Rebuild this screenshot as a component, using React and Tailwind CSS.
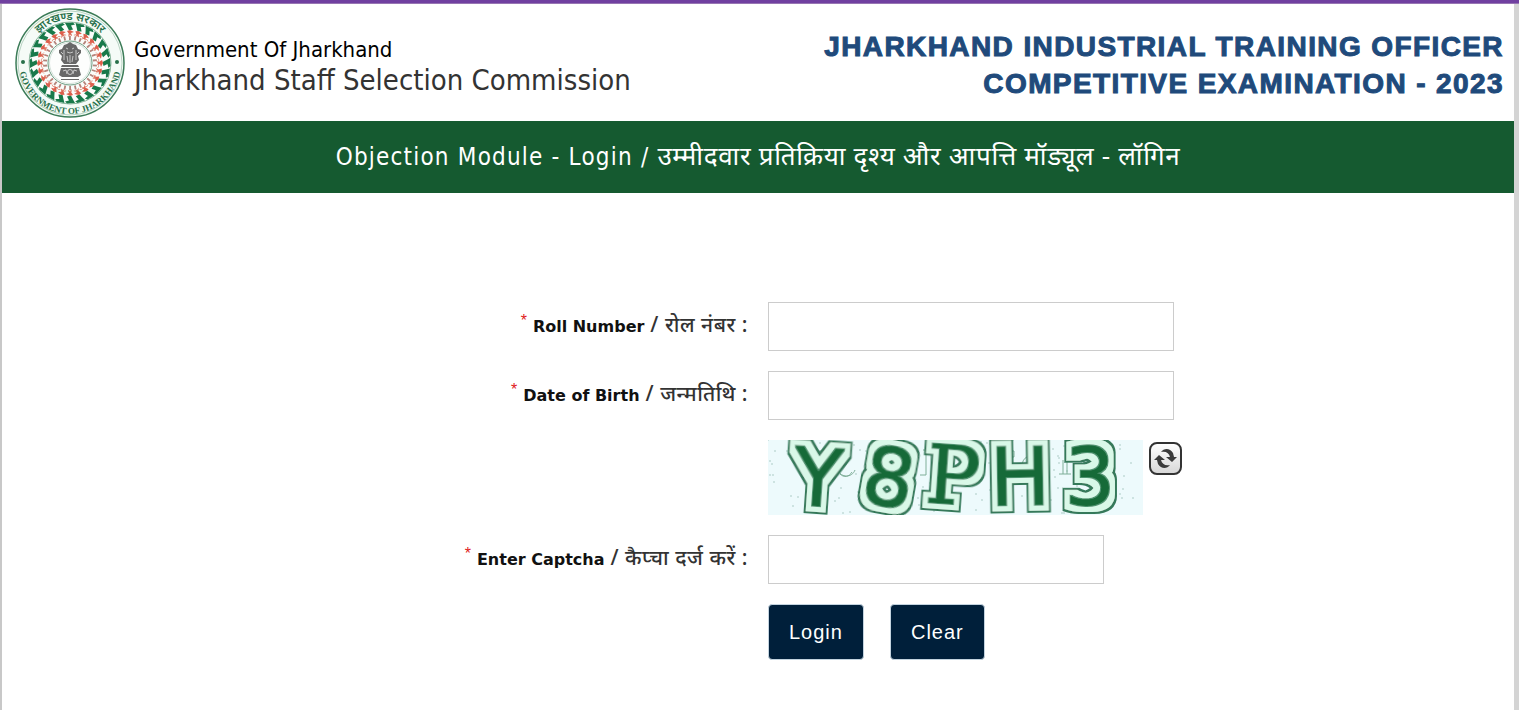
import React, { useState } from 'react';

const SPOKES = Array.from({ length: 24 }, (_, i) => i * 15);
const DOTS = Array.from({ length: 30 }, (_, i) => i * 12);

const CAPTCHA = [
  { char: 'Y', x: 50, y: 66, rotate: 4, font: 'DejaVu Sans' },
  { char: '8', x: 121, y: 66, rotate: 10, font: 'DejaVu Sans' },
  { char: 'P', x: 185, y: 64, rotate: 4, font: 'DejaVu Serif' },
  { char: 'H', x: 252, y: 65, rotate: -1, font: 'DejaVu Sans' },
  { char: '3', x: 322, y: 65, rotate: 0, font: 'DejaVu Sans' },
];

// Scattered noise behind the captcha characters
const SPECKS = Array.from({ length: 150 }, (_, i) => ({
  x: (i * 97 + ((i * i) % 31) * 7) % 373,
  y: (i * 29 + ((i * i) % 17) * 5) % 74,
}));

const StateSeal = () => (
  <svg viewBox="0 0 110 110" className="h-[110px] w-[110px] shrink-0" role="img" aria-label="Seal of Jharkhand">
    <defs>
      <path id="seal-top" d="M12 55a43 43 0 0 1 86 0" />
      <path id="seal-bottom" d="M4 55a51 51 0 0 0 102 0" />
    </defs>
    <circle cx="55" cy="55" r="54" fill="#f5fbf7" stroke="#3c7c58" strokeWidth="1.5" />
    <circle cx="55" cy="55" r="52" fill="none" stroke="#8fb8a0" strokeWidth="0.6" />
    <text fill="#28704a" fontSize="11" fontWeight="600" textAnchor="middle" fontFamily="Noto Sans, sans-serif">
      <textPath href="#seal-top" startOffset="50%">झारखण्ड सरकार</textPath>
    </text>
    <text fill="#28704a" fontSize="9" fontWeight="700" textAnchor="middle" fontFamily="Liberation Serif, serif">
      <textPath href="#seal-bottom" startOffset="50%">GOVERNMENT OF JHARKHAND</textPath>
    </text>
    <circle cx="8" cy="54" r="2" fill="#28704a" />
    <circle cx="102" cy="54" r="2" fill="#28704a" />
    <circle cx="55" cy="55" r="41" fill="#fbfdfb" stroke="#6da585" strokeWidth="0.8" />
    {SPOKES.map((deg) => (
      <g key={deg} transform={`rotate(${deg} 55 55)`}>
        <path d="M50 15l8-.5 2 2-4 1 2 4-4 1-2-4z" fill="#18794a" />
        <path d="M52 23l3-1 4 2-3 1 1 3-2-1-2 2 1-3z" fill="#dc5f4c" />
      </g>
    ))}
    {DOTS.map((deg) => (
      <g key={deg} transform={`rotate(${deg} 55 55)`}>
        <path d="M54 28h1.8v4H54z" fill="#b5837a" />
        <path d="M53 27l2-1 2 1" fill="none" stroke="#e08e7c" strokeWidth="0.8" />
      </g>
    ))}
    <circle cx="55" cy="55" r="22" fill="#fdfefd" stroke="#6a9b80" strokeWidth="1" />
    <circle cx="55" cy="55" r="20.5" fill="none" stroke="#b9cfc2" strokeWidth="0.6" />
    {/* Lion capital */}
    <g fill="#686868">
      <path d="M49 37l3-1 3-2 3 2 3 1 2 4 3 1v3l-3 3 1 4-3 4H49l-3-4 1-4-3-3v-3l3-1z" />
      <path d="M47 57h16l1 2H46z" />
      <path d="M46 60h18l2 7-3 2H47l-3-2z" />
      <path d="M46 71h18v1H46z" />
    </g>
    <g fill="none" stroke="#dedede" strokeWidth="0.8">
      <path d="M51 40l2 1M59 40l-2 1M52 44l3 1 3-1M49 42v10M61 42v10M55 47v8M52 48l1 6M58 48l-1 6M46 44l2 2M64 44l-2 2" />
      <circle cx="55" cy="64" r="2.5" />
      <path d="M48 63l3-1 1 4M62 63l-3-1-1 4" />
    </g>
  </svg>
);

const CaptchaPicture = () => (
  <svg viewBox="0 0 375 75" className="h-[75px] w-[375px]" role="img" aria-label="Captcha">
    <defs>
      {/* Dark rim, pale band and a thin solid core, all grown from the letter shape */}
      <filter id="inline-letter" x="-40%" y="-20%" width="180%" height="140%">
        <feMorphology in="SourceAlpha" operator="dilate" radius="8" result="rimShape" />
        <feMorphology in="SourceAlpha" operator="dilate" radius="6" result="bandShape" />
        <feMorphology in="SourceAlpha" operator="dilate" radius="1" result="edgeShape" />
        <feFlood floodColor="#35795a" />
        <feComposite in2="rimShape" operator="in" result="rim" />
        <feFlood floodColor="#d9f8e8" />
        <feComposite in2="bandShape" operator="in" result="band" />
        <feFlood floodColor="#4d9470" />
        <feComposite in2="edgeShape" operator="in" result="edge" />
        <feMerge>
          <feMergeNode in="rim" />
          <feMergeNode in="band" />
          <feMergeNode in="edge" />
          <feMergeNode in="SourceGraphic" />
        </feMerge>
      </filter>
    </defs>
    <rect width="375" height="75" fill="#edfafc" />
    {SPECKS.map((s, i) => (
      <circle key={i} cx={s.x} cy={s.y} r="0.8" fill="#a5c6bf" />
    ))}
    {/* Faint letter fragments showing between the big ones */}
    <g fill="none" stroke="#7fae98" strokeWidth="1">
      <path d="M46 15c4-6 12-5 13 0s-5 7-9 9M70 30c3 8 14 8 17 0M72 34c4 4 9 3 12-2" />
      <path d="M112 17c6-7 15-5 17 0M113 22c4-4 10-3 13-1" />
      <path d="M155 10h10M158 10v25h-6M163 10v27h6" />
      <path d="M234 11h12v6h-4v-3h-5v12M254 26c0-9 9-13 14-8M258 27c1-6 6-8 9-5" />
      <path d="M291 34h12M295 34V20M299 34V20M312 17h24M316 17v8M322 17v6M330 17v7" />
    </g>
    <g fontSize="80" fill="#166a38" textAnchor="middle">
      {CAPTCHA.map(({ char, x, y, rotate, font }) => (
        <text
          key={char}
          x={x}
          y={y}
          transform={`rotate(${rotate} ${x} 38)`}
          fontFamily={font}
          filter="url(#inline-letter)"
        >
          {char}
        </text>
      ))}
    </g>
  </svg>
);

const RefreshIcon = () => (
  <svg viewBox="0 0 27 27" className="h-[27px] w-[27px]" fill="#3b3b3b" aria-hidden="true">
    <path d="M9 7c3-4 9-4 12 1l1 4h3l-5 5-6-5h4c-1-4-4-6-9-5z" />
    <path d="M18 20c-3 4-9 4-12-1l-1-4H2l5-5 6 5H9c1 4 4 6 9 5z" />
  </svg>
);

const FieldLabel = ({ htmlFor, en, hi }) => (
  <label
    htmlFor={htmlFor}
    className="pr-[10px] pb-[6px] text-right font-['Noto_Sans','Noto_Sans_Devanagari',sans-serif] text-[21px] leading-[30px] font-medium tracking-wide text-[#333]"
  >
    <span className="align-top font-['Liberation_Sans',sans-serif] text-base font-normal tracking-normal text-[#e02020]">*</span>{' '}
    <span className="font-['DejaVu_Sans',sans-serif] text-base font-bold tracking-normal text-[#111]">{en}</span> / {hi} :
  </label>
);

const inputClass = 'h-[49px] border border-[#ccc] bg-white px-3 text-lg outline-none focus:border-[#155a30]';
const buttonClass =
  "h-14 rounded border border-[#c3d3df] bg-[#001f3a] px-5 font-['Liberation_Sans',sans-serif] text-[20px] tracking-wider text-white";

const App = () => {
  const [form, setForm] = useState({ roll: '', dob: '', captcha: '' });

  const handleChange = (e) => {
    setForm({ ...form, [e.target.name]: e.target.value });
  };

  const handleClear = () => setForm({ roll: '', dob: '', captcha: '' });

  return (
    <div className="flex min-h-screen flex-col border-t-[3px] border-[#7040a0] bg-white">
      <div className="h-px bg-[#9775b3]" />
      <div className="flex-1 border-r-[5px] border-l-2 border-r-[#d4d4d4] border-l-[#c8c8c8]">
        <header className="flex h-[117px] items-center justify-between pr-[10px] pl-[13px]">
          <div className="flex items-center gap-[9px]">
            <StateSeal />
            <div className="pt-[6px] font-['DejaVu_Sans_Condensed','DejaVu_Sans',sans-serif]">
              <p className="text-[22px] leading-[28px] text-black">Government Of Jharkhand</p>
              <p className="text-[29px] leading-[32px] text-[#333]">Jharkhand Staff Selection Commission</p>
            </div>
          </div>
          <h1 className="pt-1 text-right font-['Liberation_Sans',sans-serif] text-[28px] leading-[37px] font-black tracking-wider text-[#204a7b] [-webkit-text-stroke:1px_#204a7b]">
            JHARKHAND INDUSTRIAL TRAINING OFFICER
            <br />
            COMPETITIVE EXAMINATION - 2023
          </h1>
        </header>

        <div className="flex h-[72px] items-center justify-center bg-[#155a30] pb-1">
          <h2 className="font-['DejaVu_Sans_Condensed','DejaVu_Sans',sans-serif] text-[24px] tracking-wider text-white">
            Objection Module - Login /{' '}
            <span className="font-['Noto_Sans','Noto_Sans_Devanagari',sans-serif] text-[26px] tracking-wide">
              उम्मीदवार प्रतिक्रिया दृश्य और आपत्ति मॉड्यूल - लॉगिन
            </span>
          </h2>
        </div>

        <form className="flex flex-col gap-5 pt-[109px] pb-12" onSubmit={(e) => e.preventDefault()}>
          <div className="grid grid-cols-2 items-center">
            <FieldLabel htmlFor="roll" en="Roll Number" hi="रोल नंबर" />
            <div className="flex pl-[10px]">
              <input id="roll" name="roll" type="text" value={form.roll} onChange={handleChange} className={`w-[406px] ${inputClass}`} />
            </div>
          </div>

          <div className="grid grid-cols-2 items-center">
            <FieldLabel htmlFor="dob" en="Date of Birth" hi="जन्मतिथि" />
            <div className="flex pl-[10px]">
              <input id="dob" name="dob" type="text" value={form.dob} onChange={handleChange} className={`w-[406px] ${inputClass}`} />
            </div>
          </div>

          <div className="grid grid-cols-2">
            <div className="col-start-2 flex items-start gap-[6px] pl-[10px]">
              <CaptchaPicture />
              <button
                type="button"
                aria-label="Refresh captcha"
                className="mt-[2px] flex h-[33px] w-[33px] items-center justify-center rounded-lg border-2 border-[#333] bg-linear-to-b from-white to-[#d8d8d8]"
              >
                <RefreshIcon />
              </button>
            </div>
          </div>

          <div className="grid grid-cols-2 items-center">
            <FieldLabel htmlFor="captcha" en="Enter Captcha" hi="कैप्चा दर्ज करें" />
            <div className="flex pl-[10px]">
              <input id="captcha" name="captcha" type="text" value={form.captcha} onChange={handleChange} className={`w-[336px] ${inputClass}`} />
            </div>
          </div>

          <div className="grid grid-cols-2">
            <div className="col-start-2 flex gap-[26px] pl-[10px]">
              <button type="submit" className={buttonClass}>Login</button>
              <button type="button" onClick={handleClear} className={buttonClass}>Clear</button>
            </div>
          </div>
        </form>
      </div>
    </div>
  );
};

export default App;
